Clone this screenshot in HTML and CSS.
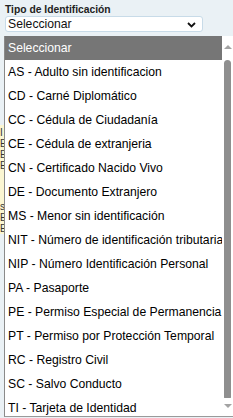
FILE: index.html
```html
<!DOCTYPE html>
<html>
<head>
    <title>Tipo de Identificación</title>
    <link rel="stylesheet" href="styles.css">
</head>
<body>
    <div class="field">
        <label class="label">Tipo de Identificación</label>
        <div class="select">
            <span>Seleccionar</span>
            <svg class="chevron" width="9" height="6" viewBox="0 0 9 6"><path d="M1 1 L4.5 4.5 L8 1" fill="none" stroke="#111" stroke-width="1.8"/></svg>
        </div>
    </div>

    <div class="behind">
        <div class="rule"></div>
        <div class="note">
            <p>I</p>
            <p>E</p>
            <p>E</p>
            <p>E</p>
            <p class="gap">s</p>
            <p>E</p>
            <p>E</p>
        </div>
    </div>

    <div class="dropdown">
        <ul class="options">
            <li class="option active">Seleccionar</li>
            <li class="option">AS - Adulto sin identificacion</li>
            <li class="option">CD - Carné Diplomático</li>
            <li class="option">CC - Cédula de Ciudadanía</li>
            <li class="option">CE - Cédula de extranjeria</li>
            <li class="option">CN - Certificado Nacido Vivo</li>
            <li class="option">DE - Documento Extranjero</li>
            <li class="option">MS - Menor sin identificación</li>
            <li class="option">NIT - Número de identificación tributaria</li>
            <li class="option">NIP - Número Identificación Personal</li>
            <li class="option">PA - Pasaporte</li>
            <li class="option">PE - Permiso Especial de Permanencia</li>
            <li class="option">PT - Permiso por Protección Temporal</li>
            <li class="option">RC - Registro Civil</li>
            <li class="option">SC - Salvo Conducto</li>
            <li class="option">TI - Tarjeta de Identidad</li>
        </ul>
        <div class="scrollbar">
            <div class="arrow up"></div>
            <div class="thumb"></div>
            <div class="arrow down"></div>
        </div>
    </div>
</body>
</html>
```

FILE: styles.css
```css
body {
    margin: 0;
    background-color: #eaf1f5;
    font-family: 'Liberation Sans', Arial, sans-serif;
    color: #111;
}

.field {
    padding: 3px 5px 0 5px;
}

.label {
    display: block;
    font-size: 10.3px;
    font-weight: bold;
    color: #222;
    line-height: 13px;
}

.select {
    width: 198px;
    height: 16px;
    background-color: #fff;
    border: 1px solid #c8dbe8;
    border-radius: 3px;
    display: flex;
    align-items: center;
    justify-content: space-between;
    padding: 0 6px 0 2px;
    box-sizing: border-box;
    font-size: 12.2px;
}

.chevron {
    margin-top: 1px;
}

/* page content hidden behind the open list */
.behind {
    margin-top: 5px;
}

.rule {
    width: 4px;
    height: 88px;
    border-right: 1px solid #c9c9c9;
}

.note {
    width: 60px;
    background-color: #fbf6d2;
    padding-top: 2px;
    font-size: 10px;
    color: #333;
}

.note p {
    margin: 0;
    line-height: 11px;
}

.note .gap {
    margin-top: 30px;
}

/* open option list */
.dropdown {
    position: absolute;
    top: 36px;
    left: 4px;
    right: 0;
    height: 380px;
    background-color: #fff;
    border-left: 1px solid #8a8a8a;
    border-bottom: 1px solid #9a9a9a;
    display: flex;
    overflow: hidden;
}

.options {
    flex: 1;
    list-style: none;
    margin: 0;
    padding: 0;
    overflow: hidden;
}

.option {
    height: 24px;
    line-height: 25px;
    padding-left: 3px;
    font-size: 12.2px;
    white-space: nowrap;
    color: #000;
}

.option.active {
    background-color: #767676;
    color: #fff;
}

.scrollbar {
    width: 11px;
    display: flex;
    flex-direction: column;
    align-items: center;
    background-color: #fff;
}

.arrow {
    width: 0;
    height: 0;
    border-left: 4px solid transparent;
    border-right: 4px solid transparent;
}

.arrow.up {
    margin-top: 9px;
    border-bottom: 4px solid #a3a3a3;
}

.arrow.down {
    margin-top: 6px;
    border-top: 4px solid #a3a3a3;
}

.thumb {
    margin-top: 11px;
    width: 7px;
    height: 338px;
    background-color: #8f8f8f;
    border-radius: 4px 4px 1px 1px;
}
```
